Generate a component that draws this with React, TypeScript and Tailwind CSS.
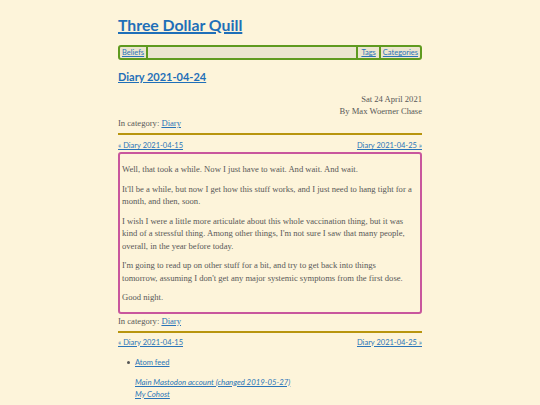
import React from "react";

function NavLinks() {
  return (
    <div className="flex justify-between text-[7.5px] leading-[12px] font-['Lato',sans-serif]">
      <a href="#" className="text-[#2a74b8] underline">« Diary 2021-04-15</a>
      <a href="#" className="text-[#2a74b8] underline">Diary 2021-04-25 »</a>
    </div>
  );
}

const paras: React.ReactNode[] = [
  "Well, that took a while. Now I just have to wait. And wait. And wait.",
  "It'll be a while, but now I get how this stuff works, and I just need to hang tight for a month, and then, soon.",
  "I wish I were a little more articulate about this whole vaccination thing, but it was kind of a stressful thing. Among other things, I'm not sure I saw that many people, overall, in the year before today.",
  <>
    I'm going to read up on other stuff for a bit, and try to get back into things
    <br />
    tomorrow, assuming I don't get any major systemic symptoms from the first dose.
  </>,
  "Good night.",
];

export default function App() {
  return (
    <div className="min-h-screen bg-[#fdf4da] text-[#585858] font-['Liberation_Serif',serif]">
      <div className="w-[304px] mx-auto pt-[15px] pb-4">
        <h1 className="text-[15.8px] leading-[20px] font-bold font-['Lato',sans-serif]">
          <a href="#" className="text-[#1f6fb8] underline decoration-[1.5px]">Three Dollar Quill</a>
        </h1>
        <nav className="mt-[10px] h-[15px] flex border-2 border-[#5f9a1f] rounded-[3px] bg-[#ece5cf] text-[7.5px] leading-[11px] font-['Lato',sans-serif]">
          <a href="#" className="px-[2px] text-[#2a74b8] underline border-r-2 border-[#5f9a1f]">Beliefs</a>
          <div className="flex-1" />
          <a href="#" className="px-[3px] text-[#2a74b8] underline border-l-2 border-[#5f9a1f]">Tags</a>
          <a href="#" className="px-[2px] text-[#2a74b8] underline border-l-2 border-[#5f9a1f]">Categories</a>
        </nav>
        <h2 className="mt-[9px] text-[11px] leading-[16px] font-bold font-['Lato',sans-serif]">
          <a href="#" className="text-[#1f6fb8] underline">Diary 2021-04-24</a>
        </h2>
        <div className="mt-[8px] text-[8.6px] leading-[12px]">
          <div className="text-right">Sat 24 April 2021</div>
          <div className="text-right">By Max Woerner Chase</div>
          <div>
            In category: <a href="#" className="text-[#2a74b8] underline">Diary</a>
          </div>
        </div>
        <div className="mt-[4px] h-[2px] bg-[#b8950e]" />
        <div className="mt-[5px]">
          <NavLinks />
        </div>
        <article className="border-2 border-[#c8569d] rounded-[3px] pt-[2px] pb-[1px] px-[2px] text-[8.6px] leading-[12.5px]">
          {paras.map((p, i) => (
            <p key={i} className="my-[7px]">{p}</p>
          ))}
        </article>
        <div className="mt-[1px] text-[8.6px] leading-[12px]">
          In category: <a href="#" className="text-[#2a74b8] underline">Diary</a>
        </div>
        <div className="mt-[4px] h-[2px] bg-[#b8950e]" />
        <div className="mt-[4px]">
          <NavLinks />
        </div>
        <ul className="mt-[8px] pl-[9px] text-[7.5px] leading-[12px] font-['Lato',sans-serif]">
          <li className="flex items-center gap-[5px]">
            <span className="w-[3px] h-[3px] rounded-full bg-[#555]" />
            <a href="#" className="text-[#2a74b8] underline">Atom feed</a>
          </li>
        </ul>
        <div className="mt-[7px] pl-[17px] text-[7.8px] leading-[12px] italic font-['Lato',sans-serif]">
          <div>
            <a href="#" className="text-[#2a74b8] underline">Main Mastodon account (changed 2019-05-27)</a>
          </div>
          <div>
            <a href="#" className="text-[#2a74b8] underline">My Cohost</a>
          </div>
        </div>
      </div>
    </div>
  );
}
